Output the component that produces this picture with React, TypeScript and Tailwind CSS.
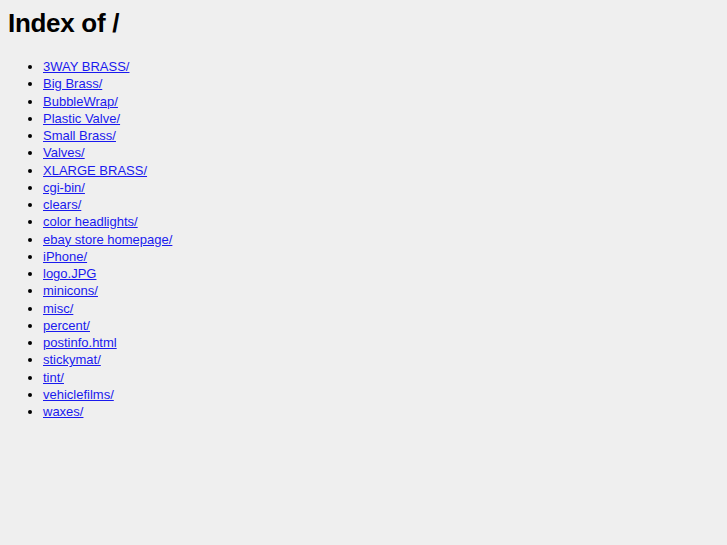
const entries = [
  "3WAY BRASS/",
  "Big Brass/",
  "BubbleWrap/",
  "Plastic Valve/",
  "Small Brass/",
  "Valves/",
  "XLARGE BRASS/",
  "cgi-bin/",
  "clears/",
  "color headlights/",
  "ebay store homepage/",
  "iPhone/",
  "logo.JPG",
  "minicons/",
  "misc/",
  "percent/",
  "postinfo.html",
  "stickymat/",
  "tint/",
  "vehiclefilms/",
  "waxes/",
];

export default function App() {
  return (
    <div className="min-h-[545px] bg-[#efefef] px-2 pt-2 text-black font-['Liberation_Sans',Arial,sans-serif]">
      <h1 className="text-[26px] leading-[30px] font-bold tracking-[-0.3px]">Index of /</h1>
      <ul className="list-disc pl-[35px] mt-[20px] text-[13px] leading-[17.25px]">
        {entries.map((name) => (
          <li key={name}>
            <a href="#" className="text-[#1a1aee] underline">
              {name}
            </a>
          </li>
        ))}
      </ul>
    </div>
  );
}
